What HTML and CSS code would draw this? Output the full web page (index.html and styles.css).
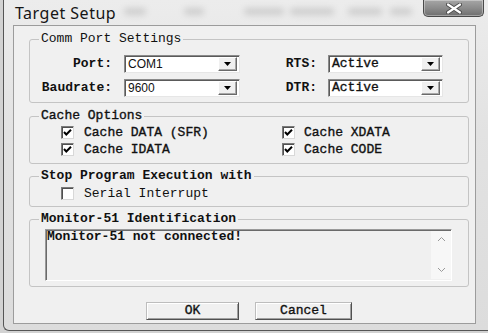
FILE: index.html
```html
<!DOCTYPE html>
<html>
<head>
<meta charset="utf-8">
<title>Target Setup</title>
<link rel="stylesheet" href="styles.css">
</head>
<body>
<div class="window">
  <div class="titlebar">
    <span class="title">Target Setup</span>
    <div class="glass">
      <span class="blob w1"></span>
      <span class="blob w2"></span>
      <span class="blob w3"></span>
      <span class="blob w4"></span>
      <span class="blob w5"></span>
      <span class="blob w6"></span>
    </div>
    <div class="close">
      <svg width="16" height="11" viewBox="0 0 16 11"><path d="M2 1.5 L14 9.5 M14 1.5 L2 9.5" stroke="#4a4a4a" stroke-width="4" stroke-linecap="round"/><path d="M2 1.5 L14 9.5 M14 1.5 L2 9.5" stroke="#ffffff" stroke-width="2.2" stroke-linecap="round"/></svg>
    </div>
  </div>
  <div class="client">
    <fieldset class="group g-comm">
      <legend>Comm Port Settings</legend>
      <div class="comm-grid">
        <span class="lbl b">Port:</span>
        <div class="combo"><span class="val sans">COM1</span><span class="drop"><svg width="7" height="4" viewBox="0 0 7 4"><path d="M0 0 H7 L3.5 4 Z" fill="#000"/></svg></span></div>
        <span class="lbl b">RTS:</span>
        <div class="combo"><span class="val m">Active</span><span class="drop"><svg width="7" height="4" viewBox="0 0 7 4"><path d="M0 0 H7 L3.5 4 Z" fill="#000"/></svg></span></div>
        <span class="lbl b">Baudrate:</span>
        <div class="combo"><span class="val sans">9600</span><span class="drop"><svg width="7" height="4" viewBox="0 0 7 4"><path d="M0 0 H7 L3.5 4 Z" fill="#000"/></svg></span></div>
        <span class="lbl b">DTR:</span>
        <div class="combo"><span class="val m">Active</span><span class="drop"><svg width="7" height="4" viewBox="0 0 7 4"><path d="M0 0 H7 L3.5 4 Z" fill="#000"/></svg></span></div>
      </div>
    </fieldset>

    <fieldset class="group g-cache">
      <legend class="m">Cache Options</legend>
      <div class="check-grid">
        <div class="check"><span class="box"><svg width="11" height="11" viewBox="0 0 11 11"><polyline points="2,5 4.3,7.5 9,2.8" fill="none" stroke="#000" stroke-width="2"/></svg></span><span class="m">Cache DATA (SFR)</span></div>
        <div class="check"><span class="box"><svg width="11" height="11" viewBox="0 0 11 11"><polyline points="2,5 4.3,7.5 9,2.8" fill="none" stroke="#000" stroke-width="2"/></svg></span><span class="m">Cache XDATA</span></div>
        <div class="check"><span class="box"><svg width="11" height="11" viewBox="0 0 11 11"><polyline points="2,5 4.3,7.5 9,2.8" fill="none" stroke="#000" stroke-width="2"/></svg></span><span class="m">Cache IDATA</span></div>
        <div class="check"><span class="box"><svg width="11" height="11" viewBox="0 0 11 11"><polyline points="2,5 4.3,7.5 9,2.8" fill="none" stroke="#000" stroke-width="2"/></svg></span><span class="m">Cache CODE</span></div>
      </div>
    </fieldset>

    <fieldset class="group g-stop">
      <legend class="b">Stop Program Execution with</legend>
      <div class="check-grid">
        <div class="check"><span class="box"></span><span>Serial Interrupt</span></div>
      </div>
    </fieldset>

    <fieldset class="group g-mon">
      <legend class="b">Monitor-51 Identification</legend>
      <div class="textbox">
        <div class="tb-text b">Monitor-51 not connected!</div>
        <div class="vscroll">
          <svg width="7" height="4" viewBox="0 0 7 4"><path d="M0 4 L3.5 0.5 L7 4" fill="none" stroke="#9a9a9a" stroke-width="1"/></svg>
          <svg width="7" height="4" viewBox="0 0 7 4"><path d="M0 0 L3.5 3.5 L7 0" fill="none" stroke="#9a9a9a" stroke-width="1"/></svg>
        </div>
      </div>
    </fieldset>

    <div class="buttons">
      <div class="btn btn-ok m">OK</div>
      <div class="btn btn-cancel m">Cancel</div>
    </div>
  </div>
</div>
</body>
</html>
```

FILE: styles.css
```css
* { box-sizing: border-box; }
html, body { margin: 0; padding: 0; }
body {
  width: 488px;
  height: 333px;
  overflow: hidden;
  background: #d2d2d2;
  font-family: "Liberation Mono", monospace;
  font-size: 13px;
  color: #111;
}
.b { font-weight: bold; }
.m { -webkit-text-stroke: 0.35px #111; }

.window {
  margin-left: 3px;
  width: 485px;
  height: 331px;
  background: linear-gradient(#ececec, #e2e2e2 40%, #dcdcdc);
  border-left: 1px solid #555;
  border-bottom: 1px solid #555;
  border-bottom-left-radius: 6px;
  padding-left: 9px;
}

.titlebar {
  height: 25px;
  display: flex;
  align-items: flex-start;
}
.title {
  font-family: "Noto Sans", sans-serif;
  font-size: 16px;
  line-height: 20px;
  letter-spacing: 0.5px;
  padding-top: 3px;
  margin-left: 2px;
  color: #151515;
}
.glass {
  display: flex;
  align-items: center;
  height: 22px;
  margin-left: 6px;
  opacity: 0.3;
}
.blob {
  height: 7px;
  background: #8a8a8a;
  filter: blur(3px);
  border-radius: 3px;
}
.w1 { width: 22px; margin-left: 2px; }
.w2 { width: 20px; margin-left: 38px; }
.w3 { width: 40px; margin-left: 40px; }
.w4 { width: 44px; margin-left: 6px; }
.w5 { width: 34px; margin-left: 14px; }
.w6 { width: 22px; margin-left: 8px; }

.close {
  margin-left: auto;
  margin-right: 4px;
  width: 61px;
  height: 17px;
  border: 1px solid #4a4a4a;
  border-top: none;
  border-radius: 0 0 5px 5px;
  background: linear-gradient(#a6a6a6, #8c8c8c 50%, #6e6e6e);
  box-shadow: inset 0 0 0 1px rgba(255,255,255,0.35);
  display: flex;
  align-items: center;
  justify-content: center;
}

.client {
  width: 463px;
  background: #f0f0f0;
  border: 1px solid #9c9c9c;
  padding: 6px 6px 3px 15px;
}

.group {
  margin: 0;
  padding: 0;
  border: 1px solid #c4c4c4;
  border-radius: 3px;
  min-width: 0;
}
.group legend {
  margin-left: 9px;
  padding: 0 2px;
  line-height: 14px;
  font-size: 13px;
}
.g-comm { padding: 9px 0 5px 0; }
.g-cache { margin-top: 6px; padding: 1px 0 5px 0; }
.g-stop { margin-top: 5px; padding: 2px 0 4px 0; }
.g-mon { margin-top: 5px; padding: 3px 0 5px 0; }

.comm-grid {
  display: grid;
  grid-template-columns: 94px 116px 88px 115px;
  grid-auto-rows: 18px;
  row-gap: 6px;
}
.lbl {
  text-align: right;
  line-height: 18px;
  padding-right: 12px;
}
.comm-grid .lbl:nth-child(3), .comm-grid .lbl:nth-child(7) { padding-right: 11px; }

.combo {
  height: 18px;
  background: #fff;
  border: 1px solid;
  border-color: #8a8a8a #e6e6e6 #e6e6e6 #8a8a8a;
  box-shadow: inset 1px 1px 0 #5a5a5a;
  display: flex;
  align-items: center;
  padding-left: 3px;
  padding-right: 2px;
}
.val {
  flex: 1;
  line-height: 14px;
}
.sans {
  font-family: "Liberation Sans", Arial, sans-serif;
  font-size: 12px;
}
.drop {
  width: 19px;
  height: 14px;
  background: #f0f0f0;
  border: 1px solid;
  border-color: #fff #6a6a6a #6a6a6a #fff;
  box-shadow: inset -1px -1px 0 #a8a8a8;
  display: flex;
  align-items: center;
  justify-content: center;
}

.check-grid {
  display: grid;
  grid-template-columns: 221px 1fr;
  grid-auto-rows: 17px;
  padding-left: 31px;
}
.check {
  display: flex;
  align-items: center;
  gap: 9px;
  line-height: 14px;
}
.check-grid .check:nth-child(odd) { gap: 10px; }
.box {
  width: 13px;
  height: 13px;
  background: #fff;
  border: 1px solid;
  border-color: #7a7a7a #d8d8d8 #d8d8d8 #7a7a7a;
  box-shadow: inset 1px 1px 0 #505050;
  display: flex;
  align-items: center;
  justify-content: center;
  flex: none;
}

.textbox {
  margin-left: 15px;
  width: 407px;
  height: 52px;
  display: flex;
  border: 1px solid;
  border-color: #9a9a9a #fff #fff #9a9a9a;
  box-shadow: inset 1px 1px 0 #6a6a6a;
}
.tb-text {
  flex: 1;
  padding: 1px 0 0 1px;
  line-height: 12px;
}
.vscroll {
  width: 20px;
  margin: 1px 0 1px 0;
  background: #f7f7f7;
  display: flex;
  flex-direction: column;
  align-items: center;
  justify-content: space-between;
  padding: 6px 0 7px;
}

.buttons {
  display: flex;
  gap: 16px;
  margin-top: 15px;
  padding-left: 117px;
}
.btn {
  height: 18px;
  background: #f0f0f0;
  border: 1px solid;
  border-color: #bdbdbd #505050 #505050 #bdbdbd;
  box-shadow: inset 1px 1px 0 #fff, inset -1px -1px 0 #a0a0a0;
  text-align: center;
  line-height: 16px;
}
.btn-ok { width: 93px; }
.btn-cancel { width: 97px; }
```
